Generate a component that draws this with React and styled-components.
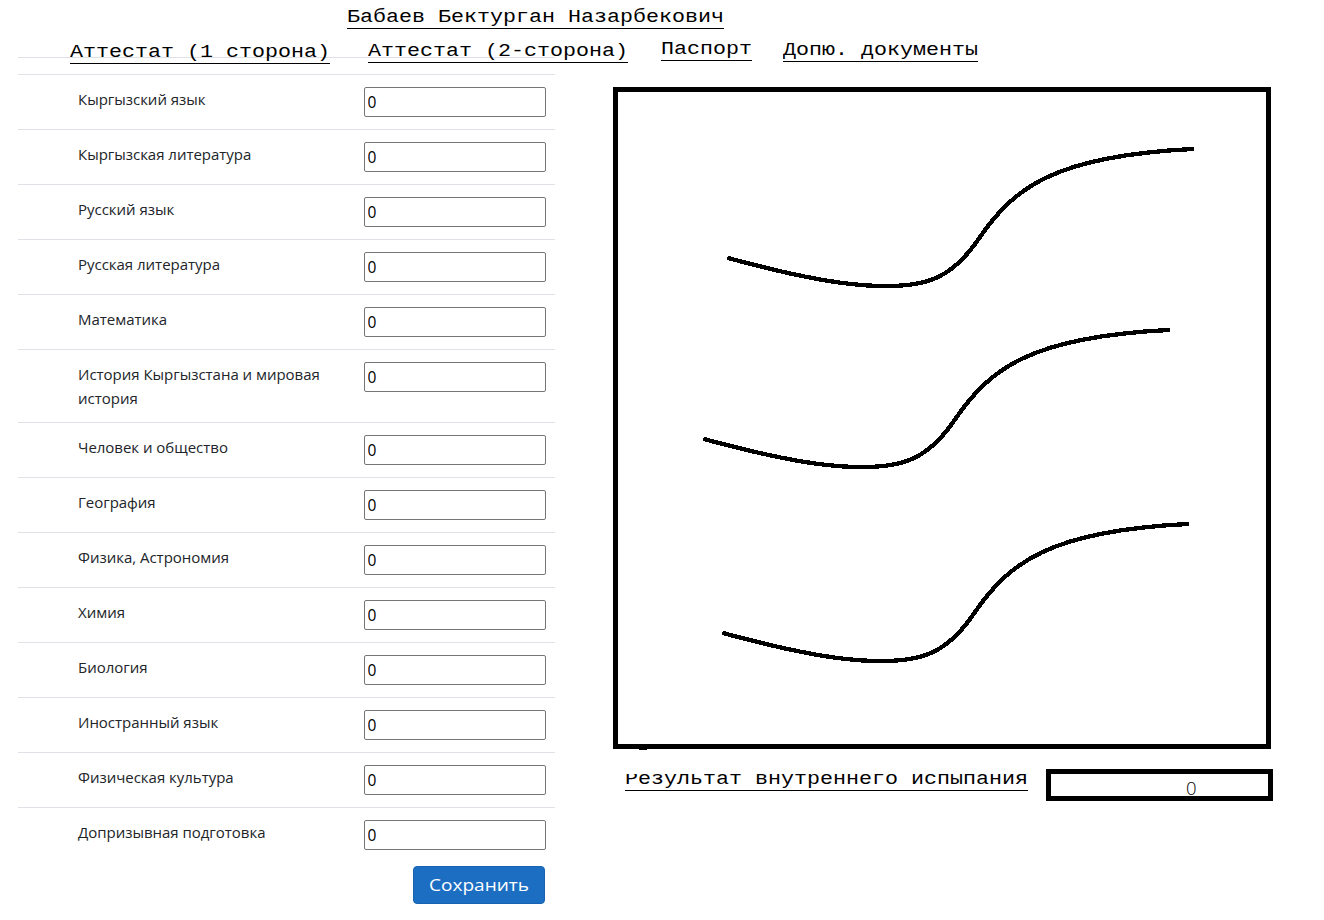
import React from 'react';
import styled, { createGlobalStyle } from 'styled-components';

const GlobalStyle = createGlobalStyle`
  * { box-sizing: border-box; }
  body { margin: 0; background: #fff; }
`;

const Page = styled.div`
  width: 1324px;
  height: 920px;
  overflow: hidden;
  background: #fff;
  color: #212529;
  font-family: 'Open Sans', 'Noto Sans', sans-serif;
`;

const Header = styled.header`
  position: relative;
  z-index: 1;
  height: 57px;
  display: flex;
  flex-direction: column;
`;

const Typed = styled.span`
  display: block;
  flex: none;
  height: 24px;
  width: ${(p) => p.$chars * 13}px;
  border-bottom: 1px solid #000;
  color: #000;
  font: 21.67px/24px 'Liberation Mono', monospace;
  white-space: pre;
`;

const Glyphs = styled.span`
  display: block;
  transform: scaleY(0.88);
  transform-origin: 0 18px;
`;

const Name = styled(Typed)`
  margin: 5px 0 0 347px;
`;

const Tabs = styled.nav`
  display: flex;
  align-items: flex-start;
  margin-top: 8px;
  padding-left: 70px;
`;

const Tab = styled(Typed)`
  margin-top: ${(p) => p.$drop}px;
  margin-right: ${(p) => p.$gap}px;
`;

const Main = styled.main`
  display: flex;
  align-items: flex-start;
  gap: 58px;
  padding-left: 18px;
`;

const Grades = styled.form`
  width: 537px;
  display: flex;
  flex-direction: column;
`;

const EmptyRow = styled.div`
  height: 17px;
  border-top: 1px solid #dee2e6;
`;

const Row = styled.label`
  display: grid;
  grid-template-columns: 254px 182px;
  column-gap: 32px;
  align-items: start;
  min-height: 55px;
  padding: 12px 9px 12px 60px;
  border-top: 1px solid #dee2e6;
`;

const Subject = styled.span`
  font-size: 15px;
  line-height: 24px;
  letter-spacing: -0.02px;
`;

const Grade = styled.input`
  width: 182px;
  height: 30px;
  padding: 0 2.5px;
  border: 1px solid #767676;
  border-radius: 2px;
  color: #000;
  background: #fff;
  font: 15.5px/24px 'Open Sans', 'Noto Sans', sans-serif;
  outline: none;
`;

const Save = styled.button`
  align-self: flex-end;
  width: 132px;
  height: 38px;
  margin: 4px 10px 0 0;
  padding: 0;
  border: 1px solid #1862b0;
  border-radius: 4px;
  background: #1b6ec2;
  color: #fff;
  font: 17px/34px 'Open Sans', 'Noto Sans', sans-serif;
`;

const SaveText = styled.span`
  display: block;
  transform: scaleX(1.12);
`;

const Preview = styled.section`
  display: flex;
  flex-direction: column;
  padding-top: 30px;
`;

const Scan = styled.div`
  width: 658px;
  height: 662px;
  border: 5px solid #000;
  svg { display: block; overflow: visible; }
`;

const Result = styled.div`
  display: flex;
  align-items: flex-start;
  padding: 20px 0 0 12px;
`;

const ResultLabel = styled(Typed)`
  width: 403px;
  height: 22px;
  line-height: 20px;
  clip-path: inset(5px 0 0 0);
`;

const ResultBox = styled.output`
  width: 227px;
  height: 32px;
  margin-left: 18px;
  padding: 3px 0 0 135px;
  border: 5px solid #000;
  color: #000;
  font: 300 18.5px/22px 'Open Sans', 'Noto Sans', sans-serif;
`;

const subjects = [
  'Кыргызский язык',
  'Кыргызская литература',
  'Русский язык',
  'Русская литература',
  'Математика',
  'История Кыргызстана и мировая история',
  'Человек и общество',
  'География',
  'Физика, Астрономия',
  'Химия',
  'Биология',
  'Иностранный язык',
  'Физическая культура',
  'Допризывная подготовка',
];

const tabs = [
  { text: 'Аттестат (1 сторона)', drop: 3, gap: 38 },
  { text: 'Аттестат (2-сторона)', drop: 2, gap: 33 },
  { text: 'Паспорт', drop: 0, gap: 31 },
  { text: 'Допю. документы', drop: 1, gap: 0 },
];

const strokes = [[0, 0], [-24, 181], [-5, 375]];
const curve = 'M729 258.3C780 272 838 286 884 286C926 286.5 952 279 980 237C1014 188 1054 156 1192.5 149';

export default function App() {
  return (
    <Page>
      <GlobalStyle />
      <Header>
        <Name $chars={29}><Glyphs>Бабаев Бектурган Назарбекович</Glyphs></Name>
        <Tabs>
          {tabs.map((t) => (
            <Tab key={t.text} $chars={t.text.length} $drop={t.drop} $gap={t.gap}>
              <Glyphs>{t.text}</Glyphs>
            </Tab>
          ))}
        </Tabs>
      </Header>
      <Main>
        <Grades>
          <EmptyRow />
          {subjects.map((s) => (
            <Row key={s}>
              <Subject>{s}</Subject>
              <Grade defaultValue="0" />
            </Row>
          ))}
          <Save type="button"><SaveText>Сохранить</SaveText></Save>
        </Grades>
        <Preview>
          <Scan>
            <svg width="648" height="652" viewBox="618 92 648 652" fill="none" stroke="#000" strokeWidth="4.3" strokeLinecap="round" shapeRendering="crispEdges">
              {strokes.map(([x, y]) => (
                <path key={y} d={curve} transform={`translate(${x} ${y})`} />
              ))}
              <path d="M639 749.5h8" strokeWidth="1" strokeLinecap="butt" />
            </svg>
          </Scan>
          <Result>
            <ResultLabel><Glyphs>Результат внутреннего испыпания</Glyphs></ResultLabel>
            <ResultBox>0</ResultBox>
          </Result>
        </Preview>
      </Main>
    </Page>
  );
}
